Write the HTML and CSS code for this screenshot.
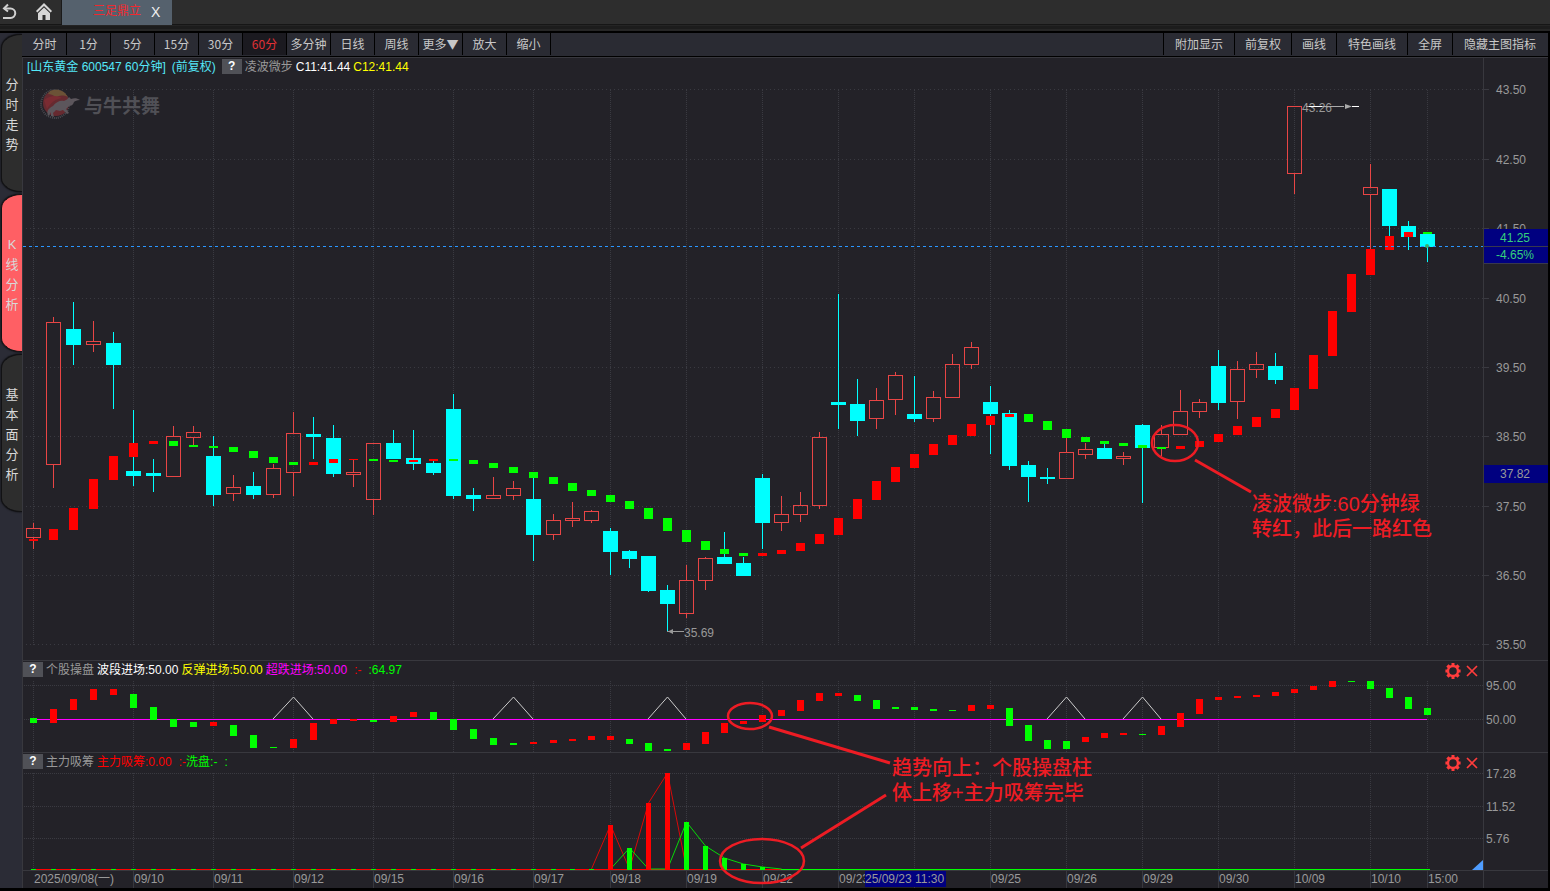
FILE: index.html
```html
<!DOCTYPE html>
<html lang="zh-CN">
<head>
  <meta charset="UTF-8" />
  <title>山东黄金 600547</title>
  <link rel="stylesheet" href="styles.css">
</head>
<body>

<header class="topbar">
  <button class="icon-btn" aria-label="返回">
    <svg width="18" height="18" viewBox="0 0 18 18" fill="none" stroke="#d0d0d0" stroke-width="2">
      <path d="M3 15h7.500a4.700 4.700 0 0 0 0-9.500H4" />
      <path d="M8 1.500L4 5.500l4 3" />
    </svg>
  </button>
  <button class="icon-btn" aria-label="首页">
    <svg width="18" height="18" viewBox="0 0 18 18" fill="#d6d6d6">
      <path d="M9 0L1 8l1.300 1.500L9 3l6.700 6.500L17 8z" />
      <path d="M9 4.500l-6 5.800V17h4.500v-5h3v5H15v-6.700z" />
    </svg>
  </button>
  <div class="tab">
    <span class="tab-name">三足鼎立</span>
    <button class="tab-close" aria-label="关闭">X</button>
  </div>
</header>

<div class="workspace">
  <nav class="side">
    <button class="side-tab"><span>分</span><span>时</span><span>走</span><span>势</span></button>
    <button class="side-tab active"><span>K</span><span>线</span><span>分</span><span>析</span></button>
    <button class="side-tab"><span>基</span><span>本</span><span>面</span><span>分</span><span>析</span></button>
  </nav>

  <div class="content">
    <div class="toolbar">
      <div class="periods">
        <button>分时</button>
        <button>1分</button>
        <button>5分</button>
        <button>15分</button>
        <button>30分</button>
        <button class="active">60分</button>
        <button>多分钟</button>
        <button>日线</button>
        <button>周线</button>
        <button>更多▼</button>
        <button>放大</button>
        <button>缩小</button>
      </div>
      <div class="tools">
        <button class="wide">附加显示</button>
        <button>前复权</button>
        <button>画线</button>
        <button class="wide">特色画线</button>
        <button>全屏</button>
        <button class="wide">隐藏主图指标</button>
      </div>
    </div>

    <main class="charts">
      <section class="panel panel-main">
        <div class="panel-head">
          <span class="stock">[山东黄金 600547 60分钟]</span>
          <span class="stock">(前复权)</span>
          <button class="help">?</button>
          <span class="muted">凌波微步</span>
          <span class="white">C11:41.44</span>
          <span class="yellow">C12:41.44</span>
        </div>
        <svg class="plot" id="main"></svg>
        <div class="logo">
          <svg width="42" height="32" viewBox="0 0 42 32">
            <circle cx="16" cy="16" r="14" fill="none" stroke="#4a4a50" stroke-width="2" stroke-dasharray="1 1" />
            <circle cx="17" cy="15" r="13" fill="#662a30" />
            <path d="M11 3c7-3 14-1 18 6-5-2-9-2-12 1-2-3-5-4-8-4z" fill="#6b5236" />
            <path d="M5 12c6-5 14-5 18-2-6 1-11 4-15 11z" fill="#7a2b32" />
            <path d="M9 27c-2-4 1-7 5-9 3-4 7-6 11-5 2-1 4-2 5-4l2 2c3-1 6-1 9 1-3 0-5 1-6 2-1 3-3 4-5 4l-3 3 3 4-2 1-4-4-3 1-4-1-3 3 1 4-3-1v-4l-2 4z" fill="#5c565c" />
          </svg>
          <span>与牛共舞</span>
        </div>
      </section>

      <section class="panel">
        <div class="panel-head">
          <button class="help">?</button>
          <span class="muted">个股操盘</span>
          <span class="white">波段进场:50.00</span>
          <span class="yellow">反弹进场:50.00</span>
          <span class="magenta">超跌进场:50.00</span>
          <span class="red gap">:-</span>
          <span class="green gap">:64.97</span>
          <span class="actions">
            <button aria-label="设置"><svg width="16" height="16" viewBox="0 0 16 16"><use href="#gear" /></svg></button>
            <button aria-label="关闭"><svg width="14" height="14" viewBox="0 0 14 14"><use href="#cross" /></svg></button>
          </span>
        </div>
        <svg class="plot plot-trend" id="trend"></svg>
      </section>

      <section class="panel">
        <div class="panel-head">
          <button class="help">?</button>
          <span class="muted">主力吸筹</span>
          <span class="red">主力吸筹:0.00</span>
          <span class="red gap">:-</span>
          <span class="green tight">洗盘:-</span>
          <span class="green gap">:</span>
          <span class="actions">
            <button aria-label="设置"><svg width="16" height="16" viewBox="0 0 16 16"><use href="#gear" /></svg></button>
            <button aria-label="关闭"><svg width="14" height="14" viewBox="0 0 14 14"><use href="#cross" /></svg></button>
          </span>
        </div>
        <svg class="plot plot-volume" id="volume"></svg>
      </section>

      <svg class="dates" id="dates"></svg>
      <svg class="notes" id="notes"></svg>
    </main>
  </div>
</div>

<svg class="defs" aria-hidden="true">
  <symbol id="gear" viewBox="0 0 16 16">
    <path fill="#ff3c3c" fill-rule="evenodd" d="M6.500 0h3v2l1.500.6L12.500 1.200l2.200 2.200L13.400 5l.6 1.500h1.600v3H14l-.6 1.500 1.300 1.600-2.200 2.200L11 13.400l-1.500.6v2h-3v-2L5 13.400l-1.500 1.400-2.200-2.200L2.600 11 2 9.500H.4v-3H2L2.600 5 1.300 3.400l2.200-2.200L5 2.600 6.500 2zM8 4.200a3.800 3.800 0 1 0 0 7.600 3.800 3.800 0 0 0 0-7.600z" />
  </symbol>
  <symbol id="cross" viewBox="0 0 14 14">
    <path fill="none" stroke="#ff3c3c" stroke-width="1.700" d="M2 2l10 10M12 2L2 12" />
  </symbol>
</svg>

<script src="chart.js"></script>
</body>
</html>
```

FILE: styles.css
```css
* {
  box-sizing: border-box;
}
body {
  margin: 0;
  height: 100vh;
  display: flex;
  flex-direction: column;
  background-color: #000;
  color: #c8c8c8;
  font-family: "Liberation Sans", "Noto Sans CJK SC", sans-serif;
  font-size: 12px;
  overflow: hidden;
}
button {
  margin: 0;
  padding: 0;
  border: none;
  background: none;
  color: inherit;
  font: inherit;
  cursor: pointer;
}
.defs {
  position: absolute;
  width: 0;
  height: 0;
}

/* top bar */
.topbar {
  height: 31px;
  display: flex;
  align-items: flex-start;
  background: linear-gradient(#2d2d2d 0 24px, #161616 24px 25px, #242424 25px 26px, #1c1c1c 26px 29px, #262626 29px);
}
.icon-btn {
  width: 22px;
  height: 24px;
  padding-top: 2px;
  text-align: left;
}
.icon-btn + .icon-btn {
  width: 40px;
  padding-left: 13px;
  border-right: 1px solid #1a1a1a;
}
.tab {
  width: 110px;
  height: 25px;
  padding-left: 31px;
  display: flex;
  background-color: #55616d;
}
.tab-name {
  width: 58px;
  line-height: 22px;
  color: #f02a30;
}
.tab-close {
  height: 24px;
  font-size: 14px;
  color: #f0f0f0;
}

/* body */
.workspace {
  flex: 1;
  display: flex;
  min-height: 0;
  padding: 2px 2px 3px 0;
}
.side {
  width: 22px;
  padding: 1px 0 0 1px;
  background-color: #2b2c36;
}
.side-tab {
  display: flex;
  flex-direction: column;
  align-items: center;
  justify-content: center;
  width: 21px;
  height: 158px;
  margin-bottom: 2px;
  padding-top: 4px;
  background-color: #2d2d2d;
  border: 1px solid #121214;
  border-right: none;
  border-radius: 20px 0 0 20px / 14px 0 0 14px;
  box-shadow: 0 0 2px #000;
  color: #d8d8d8;
  font-size: 13px;
  line-height: 20px;
}
.side-tab.active {
  background-color: #ff5f64;
}
.content {
  flex: 1;
  min-width: 0;
  display: flex;
  flex-direction: column;
}
.toolbar {
  height: 24px;
  padding: 0 1px 1px;
  display: flex;
  justify-content: space-between;
  background-color: #2a2b33;
  border-bottom: 1px solid #000;
  font-family: "Noto Sans CJK SC", sans-serif;
}
.periods,
.tools {
  display: flex;
}
.periods button,
.tools button {
  padding-bottom: 2px;
  white-space: nowrap;
}
.periods button {
  width: 44px;
  border-right: 1px solid #000;
}
.periods button.active {
  background-color: #1b1a20;
  color: #e03035;
}
.tools button {
  padding-left: 10px;
  padding-right: 10px;
  border-left: 1px solid #000;
}
.tools button.wide {
  padding-left: 11px;
  padding-right: 11px;
}

/* charts */
.charts {
  flex: 1;
  min-height: 0;
  position: relative;
  display: flex;
  flex-direction: column;
  background-color: #232228;
  border-left: 1px solid #38383e;
}
.panel {
  display: flex;
  flex-direction: column;
  border-top: 1px solid #38383e;
}
.panel-main {
  flex: 1;
  min-height: 0;
  position: relative;
}
.panel-head {
  height: 20px;
  margin-right: 64px;
  display: flex;
  align-items: flex-start;
  gap: 3px;
  border-right: 1px solid #38383e;
  line-height: 18px;
  white-space: nowrap;
}
.panel-main .panel-head {
  padding-left: 4px;
}
.help {
  width: 20px;
  height: 15px;
  margin-top: 1px;
  background-color: #505157;
  color: #fff;
  font-weight: bold;
  line-height: 15px;
}
.stock {
  margin-right: 3px;
  color: #54e8f8;
}
.muted { color: #999; }
.white { color: #fff; }
.yellow { color: #ff0; }
.magenta { color: #f0f; }
.red { color: #f00; }
.green { color: #0f0; }
.gap { margin-left: 4px; }
.tight { margin-left: -3px; }
.actions {
  height: 20px;
  margin-left: auto;
  padding-right: 4px;
  display: flex;
  align-items: center;
  gap: 4px;
}
.actions button,
.actions svg {
  display: block;
}
.plot {
  display: block;
  width: 100%;
  overflow: visible;
}
.panel-main .plot {
  flex: 1;
  min-height: 0;
}
.plot-trend {
  height: 71px;
}
.plot-volume {
  height: 97px;
}
.dates {
  display: block;
  width: 100%;
  height: 18px;
}
.notes {
  position: absolute;
  left: 0;
  top: 0;
  width: 100%;
  height: 100%;
  pointer-events: none;
}
.logo {
  position: absolute;
  left: 16px;
  top: 30px;
  display: flex;
  align-items: center;
  gap: 3px;
  color: #505056;
  font-size: 19px;
  font-weight: bold;
}

/* svg parts */
svg text {
  fill: #999;
  font-size: 12px;
}
svg .crisp {
  shape-rendering: crispEdges;
}
svg .tag {
  fill: #35d07c;
  text-anchor: middle;
}
svg .note {
  fill: #ed1c24;
  font-size: 20px;
  font-weight: 500;
}
```

FILE: chart.js
```js
const RED = '#ff0000';
const GREEN = '#00ff00';
const UP = '#e84545';
const DOWN = '#00ffff';
const GRID = '#3a3a41';
const MARK = '#ed1c24';

// u/d, body top, body bottom, high, low
const candles = [
  ['u',528,538,523,549], ['u',322,465,317,488], ['d',329,345,302,365], ['u',341,345,321,352],
  ['d',343,365,332,409], ['d',471,476,410,486], ['d',473,476,459,492], ['u',436,477,426,477],
  ['u',432,438,426,445], ['d',456,495,436,506], ['u',487,494,475,501], ['d',486,495,472,499],
  ['u',468,495,464,498], ['u',433,473,412,496], ['d',434,437,417,459], ['d',438,474,425,477],
  ['u',472,475,459,487], ['u',443,500,443,515], ['d',443,459,430,459], ['d',458,464,430,470],
  ['d',463,473,461,475], ['d',409,496,394,499], ['d',495,499,488,511], ['u',495,499,477,499],
  ['u',488,496,481,500], ['d',499,535,477,561], ['u',520,535,514,540], ['u',518,521,502,527],
  ['u',511,521,510,523], ['d',531,552,528,575], ['d',551,559,550,568], ['d',556,591,556,592],
  ['d',590,604,585,632], ['u',580,614,565,618], ['u',558,581,557,590], ['d',557,564,532,564],
  ['d',563,576,557,576], ['d',478,523,474,549], ['u',514,523,496,531], ['u',505,515,492,522],
  ['u',437,506,432,509], ['d',402,405,294,429], ['d',404,421,379,436], ['u',400,419,388,429],
  ['u',375,400,372,415], ['d',414,419,376,422], ['u',397,419,391,422], ['u',364,398,354,398],
  ['u',347,365,342,369], ['d',402,414,386,454], ['d',413,466,410,470], ['d',465,477,461,502],
  ['d',477,479,468,484], ['u',452,479,437,479], ['u',449,455,443,459], ['d',448,459,444,459],
  ['u',456,459,452,465], ['d',425,448,424,503], ['u',434,448,425,456], ['u',411,435,390,435],
  ['u',402,412,399,418], ['d',366,403,350,410], ['u',369,402,361,419], ['u',364,370,352,378],
  ['d',366,380,353,384], ['u',106,174,106,194], null, null,
  null, ['u',187,195,164,250], ['d',189,226,189,236], ['d',226,237,221,250],
  ['d',234,247,234,262]
];

// r/g, top, bottom
const steps = [
  ['r',539,541], ['r',529,540], ['r',508,530], ['r',479,509], ['r',456,480], ['r',443,457],
  ['r',441,444], ['g',441,446], ['g',445,447], ['g',446,448], ['g',447,452], ['g',451,458],
  ['g',457,463], ['g',462,465], ['r',462,465], ['r',459,463], ['r',459,460], ['g',459,461],
  ['g',460,462], ['r',460,462], ['r',459,461], ['g',459,461], ['g',460,464], ['g',463,468],
  ['g',467,473], ['g',472,478], ['g',477,484], ['g',483,491], ['g',490,496], ['g',495,502],
  ['g',501,509], ['g',508,519], ['g',518,531], ['g',530,542], ['g',541,550], ['g',549,554],
  ['g',553,556], ['r',553,556], ['r',550,554], ['r',543,551], ['r',534,544], ['r',518,535],
  ['r',499,519], ['r',481,500], ['r',467,482], ['r',454,468], ['r',444,455], ['r',435,445],
  ['r',424,436], ['r',416,425], ['r',414,417], ['g',414,422], ['g',421,430], ['g',429,438],
  ['g',437,442], ['g',441,444], ['g',443,446], ['g',445,448], ['g',447,449], ['r',446,449],
  ['r',441,447], ['r',434,442], ['r',426,435], ['r',417,427], ['r',409,418], ['r',388,410],
  ['r',355,389], ['r',311,356], ['r',274,312], ['r',249,275], ['r',236,250], ['r',232,237],
  ['g',232,234]
];

const trend = [
  ['g',718,723], ['r',709,723], ['r',699,710], ['r',689,700], ['r',689,695], ['g',694,708],
  ['g',707,720], ['g',719,727], ['g',722,727], ['r',722,726], ['g',725,736], ['g',735,748],
  ['g',747,748], ['r',739,748], ['r',723,740], ['r',719,724], ['r',719,721], ['g',720,722],
  ['r',716,722], ['r',712,717], ['g',712,720], ['g',719,730], ['g',729,739], ['g',738,745],
  ['g',743,745], ['r',742,744], ['r',740,743], ['r',739,741], ['r',736,740], ['r',736,740],
  ['g',739,744], ['g',743,751], ['g',749,751], ['r',743,750], ['r',732,744], ['r',723,733],
  ['r',721,724], ['r',715,722], ['r',710,716], ['r',700,711], ['r',693,701], ['r',693,696],
  ['g',695,701], ['g',700,709], ['g',707,709], ['g',707,710], ['g',709,711], ['g',710,711],
  ['r',705,711], ['r',705,709], ['g',708,726], ['g',725,741], ['g',740,749], ['g',741,749],
  ['r',737,742], ['r',733,738], ['r',733,735], ['g',734,735], ['r',726,735], ['r',713,727],
  ['r',699,714], ['r',697,700], ['r',696,698], ['r',695,697], ['r',692,696], ['r',689,693],
  ['r',686,690], ['r',681,687], ['g',681,682], ['g',681,689], ['g',688,698], ['g',697,709],
  ['g',708,715]
];

const peaks = [13, 24, 32, 53, 57];
const redBars = { 29: 825, 31: 803, 32: 773 };
const greenBars = { 30: 848, 33: 822, 34: 846, 35: 858, 36: 864, 37: 867 };

const days = [
  [0, '2025/09/08(一)'], [5, '09/10'], [9, '09/11'], [13, '09/12'], [17, '09/15'], [21, '09/16'],
  [25, '09/17'], [29, '09/18'], [33, '09/19'], [37, '09/22'], [41, '09/23'], [45, ''],
  [49, '09/25'], [53, '09/26'], [57, '09/29'], [61, '09/30'], [65, '10/09'], [69, '10/10'], [72, '15:00']
];

const LEFT = 23;
const PLOT = 1460;
let plotWidth = PLOT;
let mainHeight = 582;

const sx = v => LEFT + Math.round((v - LEFT) * plotWidth / PLOT);
const sy = v => 78 + Math.round((v - 78) * mainHeight / 582);
const barX = i => sx(i <= 26 ? 33 + 20 * i : 553 + 19 * (i - 26));
const tint = c => (c === 'r' ? RED : GREEN);

const rect = (x, y, w, h, fill) => `<rect class="crisp" x="${x}" y="${y}" width="${w}" height="${h}" fill="${fill}"/>`;
const vline = (x, y1, y2, color, dash = 'none') =>
  `<line class="crisp" x1="${x + 0.5}" x2="${x + 0.5}" y1="${y1}" y2="${y2}" stroke="${color}" stroke-dasharray="${dash}"/>`;
const hline = (y, x1, x2, color, dash = 'none') =>
  `<line class="crisp" x1="${x1}" x2="${x2}" y1="${y + 0.5}" y2="${y + 0.5}" stroke="${color}" stroke-dasharray="${dash}"/>`;
const label = (x, y, text, cls = '') => `<text x="${x}" y="${y}" class="${cls}">${text}</text>`;
const path = (points, color) => `<polyline points="${points.join(' ')}" fill="none" stroke="${color}"/>`;

function render(id, top, html) {
  const svg = document.getElementById(id);
  const box = svg.getBoundingClientRect();
  svg.setAttribute('viewBox', `${LEFT} ${top} ${box.width} ${box.height}`);
  svg.innerHTML = html;
}

function drawMain(axis) {
  let out = '';
  [89, 159, 228, 298, 367, 436, 506, 575, 644].forEach((v, n) => {
    const y = sy(v);
    out += hline(y, 26, axis, GRID, '1 3') + hline(y, axis, axis + 6, GRID);
    out += label(axis + 13, y + 5, (43.5 - n).toFixed(2));
  });
  days.forEach(([i]) => out += vline(barX(i), sy(90), sy(645), GRID, '1 1'));
  out += vline(axis, 78, sy(660), '#38383e');

  candles.forEach((c, i) => {
    if (!c) return;
    const x = barX(i);
    const [top, bottom, high, low] = c.slice(1).map(sy);
    if (c[0] === 'd') {
      out += rect(x, high, 1, low - high, DOWN) + rect(x - 7, top, 15, bottom - top, DOWN);
    } else {
      out += rect(x, high, 1, top - high, UP) + rect(x, bottom, 1, low - bottom, UP);
      out += `<rect class="crisp" x="${x - 6.5}" y="${top + 0.5}" width="14" height="${bottom - top - 1}" fill="none" stroke="${UP}"/>`;
    }
  });
  steps.forEach(([c, a, b], i) => out += rect(barX(i) - 4, sy(a), 9, sy(b) - sy(a), tint(c)));

  // last price
  const y = sy(246);
  out += hline(y, LEFT, axis, '#2a96ff', '3 3');
  out += `<circle cx="${barX(72)}" cy="${y}" r="2" fill="#35b070"/>`;
  out += rect(axis + 1, y - 17, 64, 34, '#000080') + hline(y, axis + 1, axis + 65, '#38384e') + hline(y + 17, axis + 1, axis + 65, '#38384e');
  out += label(axis + 32, y - 4, '41.25', 'tag') + label(axis + 32, y + 13, '-4.65%', 'tag');
  out += rect(axis + 1, sy(465), 64, 18, '#000080') + label(axis + 17, sy(478), '37.82');

  // high and low
  const hx = barX(65);
  out += label(hx + 8, sy(106) + 6, '43.26') + hline(sy(106), hx + 12, hx + 50, '#aaa') + hline(sy(106), hx + 58, hx + 65, '#fff');
  out += hline(sy(106), hx + 15, hx + 28, '#fff') + `<path d="M${hx + 51} ${sy(106) - 2}l7 2.500-7 2.500z" fill="#aaa"/>`;
  const lx = barX(32);
  out += label(lx + 17, sy(631) + 6, '35.69') + hline(sy(631), lx, lx + 17, '#999');
  out += `<path d="M${lx + 6} ${sy(631) - 2}l-5 2.500 5 2.500z" fill="#999"/>`;
  render('main', 78, out);
}

function drawTrend(axis) {
  let out = '';
  [[685, '95.00'], [719, '50.00']].forEach(([y, text]) => {
    out += hline(y, 24, axis, GRID, '1 1') + label(axis + 3, y + 5, text);
  });
  days.forEach(([i]) => out += vline(barX(i), 681, 752, GRID, '1 1'));
  out += vline(axis, 681, 752, '#38383e');
  out += hline(719, barX(0), barX(72), '#ff00ff');
  peaks.forEach(i => out += path([[barX(i - 1), 719], [barX(i) + 0.5, 697], [barX(i + 1), 719]], '#ccc'));
  trend.forEach(([c, a, b], i) => out += rect(barX(i) - 3, a, 7, b - a, tint(c)));
  render('trend', 681, out);
}

function drawVolume(axis) {
  let out = '';
  [[773, '17.28'], [806, '11.52'], [838, '5.76']].forEach(([y, text]) => {
    out += hline(y, 24, axis, GRID, '1 1') + label(axis + 3, y + 5, text);
  });
  days.forEach(([i]) => out += vline(barX(i), 773, 870, GRID, '1 1'));
  out += vline(axis, 773, 870, '#38383e');
  out += hline(869, barX(0) - 2, barX(38), RED);
  for (let i = 0; i < 29; i++) out += rect(barX(i) - 2, 869, 5, 1, GREEN);

  const redLine = [];
  for (let i = 28; i <= 33; i++) redLine.push([barX(i) + 0.5, redBars[i] || 869]);
  const greenLine = [];
  for (let i = 29; i <= 38; i++) greenLine.push([barX(i) + 0.5, greenBars[i] || 869]);
  out += path(redLine, '#d80808') + path(greenLine, '#08d808');
  out += hline(869, barX(38), barX(72) + 3, GREEN);

  for (const i in redBars) out += rect(barX(+i) - 2, redBars[i], 5, 870 - redBars[i], RED);
  for (const i in greenBars) out += rect(barX(+i) - 2, greenBars[i], 5, 870 - greenBars[i], GREEN);
  out += `<path d="M${axis} 860v10h-11z" fill="#4f9dff"/>`;
  render('volume', 773, out);
}

function drawDates(axis) {
  let out = hline(870, LEFT, axis + 65, '#38383e') + vline(axis, 870, 888, '#38383e');
  days.forEach(([i, text]) => {
    if (i) out += vline(barX(i), 870, 888, '#38383e');
    if (text) out += label(barX(i) + 1, 883, text);
  });
  out += rect(sx(865), 871, 81, 16, '#000080') + label(sx(865), 883, '25/09/23 11:30');
  render('dates', 870, out);
}

function drawNotes() {
  const ring = (x, y, rx, ry) => `<ellipse cx="${sx(x)}" cy="${y}" rx="${rx}" ry="${ry}" fill="none" stroke="${MARK}" stroke-width="2.500"/>`;
  const link = (x1, y1, x2, y2) => `<line x1="${sx(x1)}" y1="${y1}" x2="${sx(x2)}" y2="${y2}" stroke="${MARK}" stroke-width="3"/>`;
  const foot = mainHeight - 582;
  let out = ring(1175, sy(443), 23, 18) + link(1195, sy(460), 1251, sy(492));
  out += label(sx(1252), sy(511), '凌波微步:60分钟绿', 'note') + label(sx(1252), sy(511) + 25, '转红，此后一路红色', 'note');
  out += ring(750, 716 + foot, 22, 13) + link(769, 727 + foot, 890, 763 + foot);
  out += label(sx(892), 775 + foot, '趋势向上：个股操盘柱', 'note') + label(sx(892), 800 + foot, '体上移+主力吸筹完毕', 'note');
  out += ring(762, 861 + foot, 42, 22) + link(801, 848 + foot, 886, 795 + foot);
  render('notes', 57, out);
}

function draw() {
  const box = document.getElementById('main').getBoundingClientRect();
  plotWidth = box.width - 65;
  mainHeight = box.height;
  const axis = LEFT + plotWidth;
  drawMain(axis);
  drawTrend(axis);
  drawVolume(axis);
  drawDates(axis);
  drawNotes();
}

window.addEventListener('resize', draw);
draw();
```
